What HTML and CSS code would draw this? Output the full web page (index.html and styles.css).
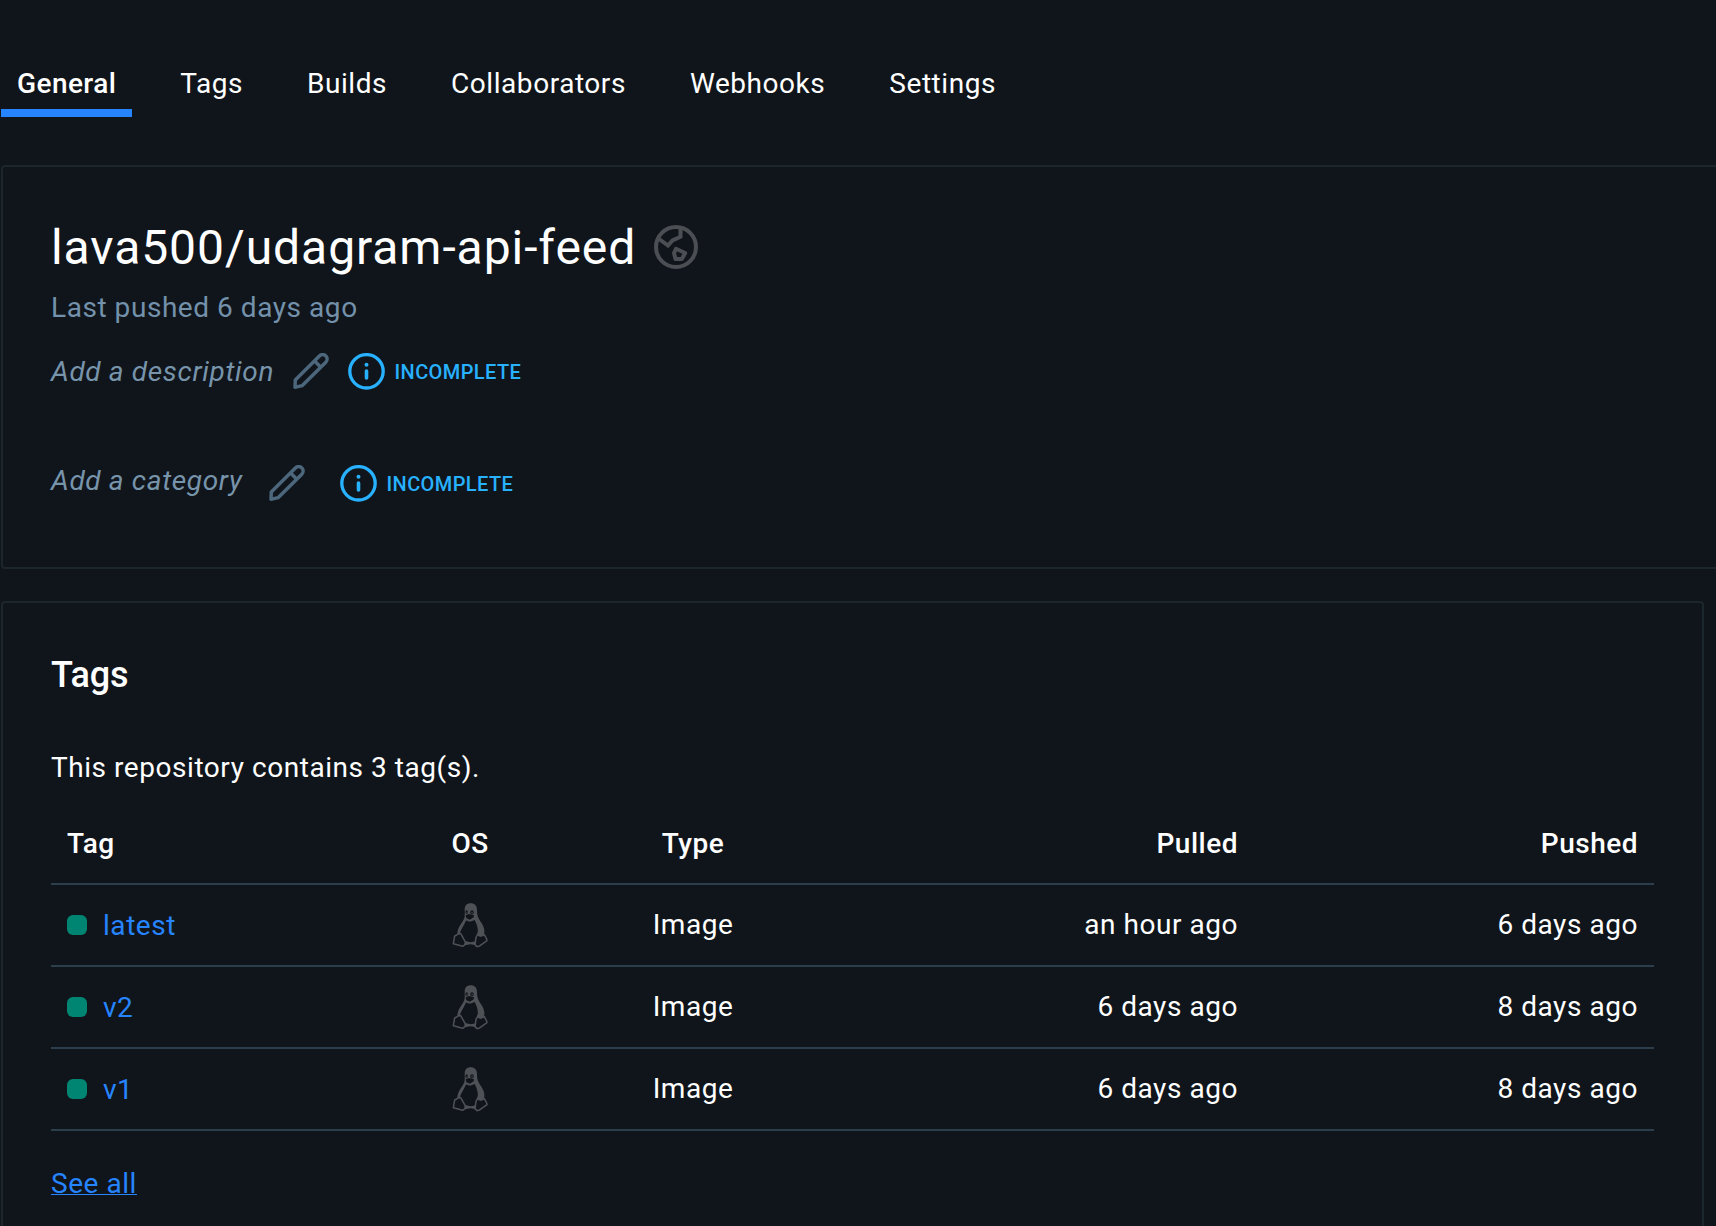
FILE: index.html
```html
<!DOCTYPE html>
<html lang="en">
<head>
<meta charset="utf-8">
<title>lava500/udagram-api-feed</title>
<link rel="stylesheet" href="styles.css">
</head>
<body>
<svg class="sprite" aria-hidden="true">
  <symbol id="pencil" viewBox="0 0 36 36">
    <path d="M2 34.2 2.3 27 26.4 2.9C28.2 1.2 31 1.2 32.8 2.9 34.5 4.7 34.5 7.5 32.8 9.2L9.3 32.6ZM21.6 8 27.8 14.2" fill="none" stroke="currentColor" stroke-width="3.5" stroke-linejoin="round"/>
  </symbol>
  <symbol id="info" viewBox="0 0 37 37">
    <circle cx="18.5" cy="18.3" r="16.7" fill="none" stroke="currentColor" stroke-width="3.3"/>
    <circle cx="18.5" cy="11.7" r="2" fill="currentColor"/>
    <path d="M18.5 18v7" stroke="currentColor" stroke-width="3.6" stroke-linecap="round"/>
  </symbol>
  <symbol id="linux" viewBox="66 68 108 134">
    <path fill="currentColor" d="M104 88C104 75 111 69 122 69 134 69 141 76 141 89 141 112 148 116 157 132 163 143 165 154 162 161L141 166C147 147 141 133 134 119 128 122 121 125 114 123 108 118 108 121 103 131 98 142 91 149 89 163L82 161C82 145 92 132 99 121 106 110 104 102 104 88Z"/>
    <g class="face">
      <ellipse cx="110" cy="96" rx="3.4" ry="6"/>
      <ellipse cx="126" cy="96" rx="5.2" ry="6.4"/>
      <path d="M107 105 117 101 132 105 131 111 119 118 109 113Z"/>
    </g>
    <path fill="currentColor" d="M109.500 95h2.500v5h-2.500zM124.500 94h3.500v5h-3.500z"/>
    <path fill="none" stroke="currentColor" stroke-width="4.6" stroke-linejoin="round" d="M74 167 80 164 86 159 92 160 106 185 105 193 98 198 70 190ZM143 162 138 171 135 193 141 199 149 197 171 181 170 176 163 163 155 166 148 166Z"/>
    <path fill="currentColor" d="M105 182 122 186 138 183 136 194 121 192 104 195ZM141 158 163 157 160 166 151 169 144 165Z"/>
  </symbol>
</svg>

<nav class="tabs">
  <a class="tab tab-active">General</a>
  <a class="tab">Tags</a>
  <a class="tab">Builds</a>
  <a class="tab">Collaborators</a>
  <a class="tab">Webhooks</a>
  <a class="tab">Settings</a>
</nav>

<section class="card summary">
  <div class="title-row">
    <h1 class="title">lava500/udagram-api-feed</h1>
    <svg class="globe" viewBox="0 0 44 44" fill="none" stroke="currentColor" stroke-width="4">
      <circle cx="22" cy="22" r="20"/>
      <path d="M4.500 13.500 14 20.500 18.500 15.500 26.500 11.800V3"/>
      <path stroke-linejoin="round" d="M22 23.800 31.200 28 27.800 34H21.500L20 28Z"/>
    </svg>
  </div>
  <p class="pushed">Last pushed 6 days ago</p>
  <div class="field description">
    <span class="placeholder">Add a description</span>
    <svg class="pencil"><use href="#pencil"/></svg>
    <svg class="info"><use href="#info"/></svg>
    <span class="status">INCOMPLETE</span>
  </div>
  <div class="field category">
    <span class="placeholder">Add a category</span>
    <svg class="pencil"><use href="#pencil"/></svg>
    <svg class="info"><use href="#info"/></svg>
    <span class="status">INCOMPLETE</span>
  </div>
</section>

<section class="card tags">
  <h2 class="heading">Tags</h2>
  <p class="count">This repository contains 3 tag(s).</p>
  <div class="row head">
    <span class="tag">Tag</span><span class="center">OS</span><span class="center">Type</span><span class="right">Pulled</span><span class="right">Pushed</span>
  </div>
  <div class="row">
    <a class="tag link"><i class="dot"></i>latest</a><span class="os"><svg class="linux"><use href="#linux"/></svg></span><span class="center">Image</span><span class="right">an hour ago</span><span class="right">6 days ago</span>
  </div>
  <div class="row">
    <a class="tag link"><i class="dot"></i>v2</a><span class="os"><svg class="linux"><use href="#linux"/></svg></span><span class="center">Image</span><span class="right">6 days ago</span><span class="right">8 days ago</span>
  </div>
  <div class="row">
    <a class="tag link"><i class="dot"></i>v1</a><span class="os"><svg class="linux"><use href="#linux"/></svg></span><span class="center">Image</span><span class="right">6 days ago</span><span class="right">8 days ago</span>
  </div>
  <a class="see-all">See all</a>
</section>
</body>
</html>
```
FILE: styles.css
```css
* { box-sizing: border-box; }
html { background: #10151b; overflow: hidden; }
body {
  margin: 0;
  padding: 63px 0 0 1px;
  height: 1226px;
  overflow: hidden;
  background: #10151b;
  color: #fff;
  font: 400 28px/41px Roboto, "Liberation Sans", sans-serif;
  letter-spacing: 0.55px;
}
h1, h2, p { margin: 0; font-weight: 400; }
svg { display: block; flex: none; }
.sprite { display: none; }

.tabs { display: flex; gap: 32px; height: 54px; }
.tab { padding: 0 16px; border-bottom: 8px solid transparent; white-space: nowrap; }
.tab-active { font-weight: 500; letter-spacing: 0.42px; border-color: #2684ff; }

.card { border: 2px solid #1c262d; border-radius: 4px; padding: 48px; }
.summary { width: 1800px; height: 404px; margin-top: 48px; }
.title-row { display: flex; align-items: center; gap: 18px; height: 65px; }
.title { font-size: 48px; line-height: 65px; letter-spacing: 0.94px; }
.globe { width: 44px; height: 44px; margin-bottom: 1px; color: #4b4e53; }
.pushed { line-height: 55px; color: #7391ab; }

.field { display: flex; height: 73px; color: #7794ab; }
.placeholder { font-style: italic; line-height: 73px; white-space: nowrap; letter-spacing: 0.66px; }
.description .placeholder { width: 241px; }
.category { margin-top: 39px; }
.category .placeholder { width: 217px; line-height: 67px; }
.pencil { width: 36px; height: 36px; margin: 18px 0 0 0.5px; color: #4c667b; }
.info { width: 37px; height: 37px; margin: 18px 10px 0 19px; color: #27b1ff; }
.category .info { margin-left: 35px; }
.status { font-size: 20px; font-weight: 500; line-height: 74px; color: #27b1ff; letter-spacing: 0.4px; }

.tags { width: 1703px; height: 660px; margin-top: 32px; }
.heading { font-size: 36px; line-height: 48px; font-weight: 500; letter-spacing: -0.1px; }
.count { margin: 34px 0 2px; line-height: 69px; }
.row {
  display: grid;
  grid-template-columns: 320px 198px 248px 436px 400px;
  width: 1603px;
  height: 82px;
  line-height: 79px;
  border-bottom: 2px solid #2c3e4c;
}
.head { height: 81px; font-weight: 500; letter-spacing: 0.5px; }
.tag { padding-left: 16px; }
.link { display: flex; align-items: center; gap: 16px; line-height: 81px; height: 80px; color: #2684ff; }
.dot { width: 20px; height: 20px; border-radius: 6px; background: #008573; }
.center { text-align: center; }
.right { text-align: right; padding-right: 15px; }
.os { display: flex; justify-content: center; padding-top: 18px; }
.linux { width: 36px; height: 44.67px; color: #4e5155; }
.face { fill: #10151b; }
.see-all { display: inline-block; line-height: 105px; color: #2684ff; text-decoration: underline; text-decoration-thickness: 1px; }
```
